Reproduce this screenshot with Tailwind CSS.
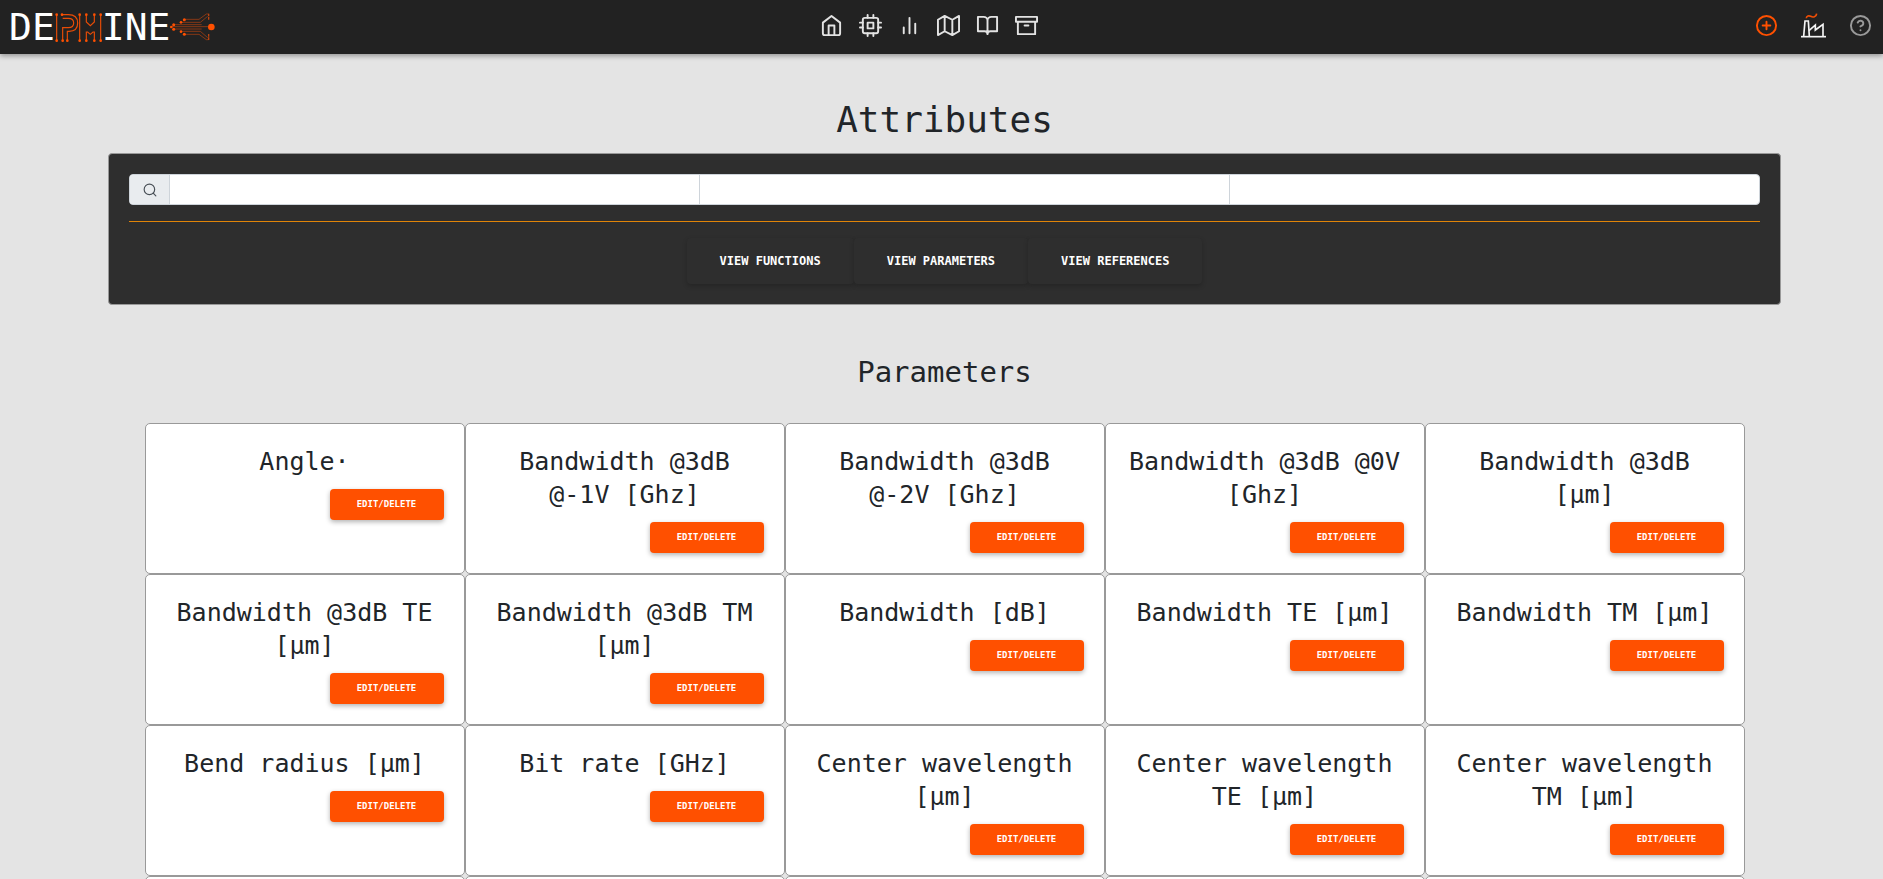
<!DOCTYPE html>
<html lang="en">
<head>
<meta charset="utf-8">
<meta name="viewport" content="width=device-width, initial-scale=1">
<title>Dephine – Attributes</title>
<script src="https://cdn.jsdelivr.net/npm/@tailwindcss/browser@4"></script>
</head>
<body class="min-h-screen bg-[#e4e4e4] font-['DejaVu_Sans_Mono',monospace] text-[#212529]">
<header class="grid h-[54px] grid-cols-[1fr_auto_1fr] items-center bg-[#222] pl-[9px] pr-[11px] shadow-[0_2px_5px_rgba(0,0,0,0.35)]">
  <a href="#" aria-label="Dephine" class="flex h-[52px] items-center text-[38px] leading-[48px] text-white">
    <span>DE</span>
    <svg class="mt-0.5 h-9 w-[47px] shrink-0" viewBox="14 0 141 108" fill="none" stroke="#e84c06" stroke-width="3.500">
      <path d="M19 14V92M88 14V92M151 14V92"/>
      <path d="M34 14H54C72 14 82 24 82 39C82 55 72 64 56 64H51V92"/>
      <path d="M37 25H54C65 25 70 31 70 39C70 48 64 53 54 53H37V92"/>
      <path d="M108 14V36L120 47L132 36V14M108 92V66H112L120 73L128 66H132V92"/>
      <g fill="#ff5000" stroke="none"><circle cx="19" cy="14" r="4"/><circle cx="19" cy="92" r="4"/><circle cx="35" cy="14" r="4"/><circle cx="37" cy="92" r="4"/><circle cx="51" cy="92" r="4"/><circle cx="88" cy="14" r="4"/><circle cx="88" cy="92" r="4"/><circle cx="108" cy="14" r="4"/><circle cx="132" cy="14" r="4"/><circle cx="108" cy="92" r="4"/><circle cx="132" cy="92" r="4"/><circle cx="151" cy="14" r="4"/><circle cx="151" cy="92" r="4"/></g>
    </svg>
    <span>INE</span>
    <svg class="h-9 w-[46px] shrink-0" viewBox="9 0 138 108" fill="none" stroke="#b8430f" stroke-width="2">
      <path d="M52 31H96L118 15H125M42 40H100L122 22M20 47H104M12 53H124M20 60H104M42 67H100L122 86M52 76H96L118 92H125"/>
      <path d="M125 14V33M125 75V94" stroke-width="4" stroke-dasharray="8 2"/>
      <g fill="#ff5000" stroke="none"><circle cx="133" cy="54" r="10"/><circle cx="52" cy="32" r="4.500"/><circle cx="42" cy="40" r="4"/><circle cx="20" cy="47" r="4.500"/><circle cx="13" cy="54" r="4"/><circle cx="20" cy="61" r="4.500"/><circle cx="42" cy="68" r="4"/><circle cx="52" cy="76" r="4.500"/></g>
    </svg>
  </a>
  <nav class="flex gap-4 pr-[23px] pb-[3px] text-[#e3e3e3]">
    <a href="#" aria-label="Home"><svg class="size-[23px]" viewBox="0 0 24 24" fill="none" stroke="currentColor" stroke-width="2" stroke-linecap="round" stroke-linejoin="round"><path d="M3 9l9-7 9 7v11a2 2 0 0 1-2 2H5a2 2 0 0 1-2-2z"/><path d="M9 22V12h6v10"/></svg></a>
    <a href="#" aria-label="Components"><svg class="size-[23px]" viewBox="0 0 24 24" fill="none" stroke="currentColor" stroke-width="2" stroke-linecap="round" stroke-linejoin="round"><rect x="4" y="4" width="16" height="16" rx="2"/><path d="M9 9h6v6H9zM9 1v3M15 1v3M9 20v3M15 20v3M20 9h3M20 14h3M1 9h3M1 14h3"/></svg></a>
    <a href="#" aria-label="Charts"><svg class="size-[23px]" viewBox="0 0 24 24" fill="none" stroke="currentColor" stroke-width="2" stroke-linecap="round" stroke-linejoin="round"><path d="M12 20V4M18 20V10M6 20v-6"/></svg></a>
    <a href="#" aria-label="Map"><svg class="size-[23px]" viewBox="0 0 24 24" fill="none" stroke="currentColor" stroke-width="2" stroke-linecap="round" stroke-linejoin="round"><path d="M1 6v16l7-4 8 4 7-4V2l-7 4-8-4zM8 2v16M16 6v16"/></svg></a>
    <a href="#" aria-label="References"><svg class="size-[23px]" viewBox="0 0 24 24" fill="none" stroke="currentColor" stroke-width="2" stroke-linecap="round" stroke-linejoin="round"><path d="M2 3h6a4 4 0 0 1 4 4v14a3 3 0 0 0-3-3H2zM22 3h-6a4 4 0 0 0-4 4v14a3 3 0 0 1 3-3h7z"/></svg></a>
    <a href="#" aria-label="Archive"><svg class="size-[23px]" viewBox="0 0 24 24" fill="none" stroke="currentColor" stroke-width="2" stroke-linecap="round" stroke-linejoin="round"><path d="M21 8v13H3V8M1 3h22v5H1zM10 12h4"/></svg></a>
  </nav>
  <div class="flex items-center justify-end gap-[23px] pb-[3px]">
    <a href="#" aria-label="Add" class="text-[#ff5000]"><svg class="size-[23px]" viewBox="0 0 24 24" fill="none" stroke="currentColor" stroke-width="2" stroke-linecap="round"><circle cx="12" cy="12" r="10"/><path d="M12 8v8M8 12h8"/></svg></a>
    <a href="#" aria-label="Foundries"><svg class="h-[25px] w-[25px]" viewBox="0 0 75 75" fill="none" stroke="#f5f5f5" stroke-width="5" stroke-linejoin="miter"><path d="M0 71H75"/><path d="M8 70L12 24H22L25 70"/><path d="M24 53L43 36V51L66 34V70"/><path d="M16 16C16 8 24 7 29 10C36 14 46 12 47 2" stroke="#f04e05"/></svg></a>
    <a href="#" aria-label="Help" class="text-[#999]"><svg class="size-[23px]" viewBox="0 0 24 24" fill="none" stroke="currentColor" stroke-width="2" stroke-linecap="round" stroke-linejoin="round"><circle cx="12" cy="12" r="10"/><path d="M9.09 9a3 3 0 0 1 5.83 1c0 2-3 3-3 3M12 17h.01"/></svg></a>
  </div>
</header>

<main class="pl-[6px] pt-[42px]">
  <h1 class="mb-[9px] text-center text-[36px] leading-[48px]">Attributes</h1>
  <section class="mx-auto max-w-[1673px] rounded border border-[#999] bg-[#2e2e2e] p-5">
    <form class="flex h-[31px] overflow-hidden rounded border border-[#ced4da] bg-white">
      <span class="flex w-[39px] shrink-0 items-center justify-center bg-[#e9ecef] text-[#495057]">
        <svg class="size-[14px]" viewBox="0 0 24 24" fill="none" stroke="currentColor" stroke-width="2" stroke-linecap="round"><circle cx="11" cy="11" r="9"/><path d="M17.500 17.500L22 22"/></svg>
      </span>
      <input type="text" aria-label="Search name" class="min-w-0 flex-1 border-l border-[#ced4da] px-2 text-sm outline-none">
      <input type="text" aria-label="Search unit" class="min-w-0 flex-1 border-l border-[#ced4da] px-2 text-sm outline-none">
      <input type="text" aria-label="Search description" class="min-w-0 flex-1 border-l border-[#ced4da] px-2 text-sm outline-none">
    </form>
    <hr class="my-4 border-[#e08408]">
    <div class="flex justify-center text-xs font-bold text-white">
      <button type="button" class="h-[46px] rounded-sm bg-[#2e2e2e] px-[33px] shadow-[0_2px_5px_rgba(0,0,0,0.2)]">VIEW FUNCTIONS</button>
      <button type="button" class="h-[46px] rounded-sm bg-[#2e2e2e] px-[33px] shadow-[0_2px_5px_rgba(0,0,0,0.2)]">VIEW PARAMETERS</button>
      <button type="button" class="h-[46px] rounded-sm bg-[#2e2e2e] px-[33px] shadow-[0_2px_5px_rgba(0,0,0,0.2)]">VIEW REFERENCES</button>
    </div>
  </section>

  <h2 class="mt-[49px] mb-[33px] text-center text-[29px] leading-9">Parameters</h2>
  <div id="cards" class="mx-auto grid max-w-[1600px] grid-cols-5"></div>
</main>

<script>
const names = [
  'Angle·', 'Bandwidth @3dB @-1V [Ghz]', 'Bandwidth @3dB @-2V [Ghz]', 'Bandwidth @3dB @0V [Ghz]', 'Bandwidth @3dB [µm]',
  'Bandwidth @3dB TE [µm]', 'Bandwidth @3dB TM [µm]', 'Bandwidth [dB]', 'Bandwidth TE [µm]', 'Bandwidth TM [µm]',
  'Bend radius [µm]', 'Bit rate [GHz]', 'Center wavelength [µm]', 'Center wavelength TE [µm]', 'Center wavelength TM [µm]'
];
const card = name => `
  <article class="flex flex-col items-end rounded-[5px] border border-[#999] bg-white p-5">
    <h3 class="w-full pt-px pb-[11px] text-center text-[25px] leading-[33px]">${name}</h3>
    <button type="button" class="h-[31px] w-[114px] rounded-sm bg-[#ff5000] text-[9px] font-bold text-white shadow-[0_2px_5px_rgba(0,0,0,0.3)]">EDIT/DELETE</button>
  </article>`;
const blank = '<article class="rounded-[5px] border border-[#999] bg-white py-5"></article>';
document.getElementById('cards').innerHTML = names.map(card).join('') + blank.repeat(5);
</script>
</body>
</html>
